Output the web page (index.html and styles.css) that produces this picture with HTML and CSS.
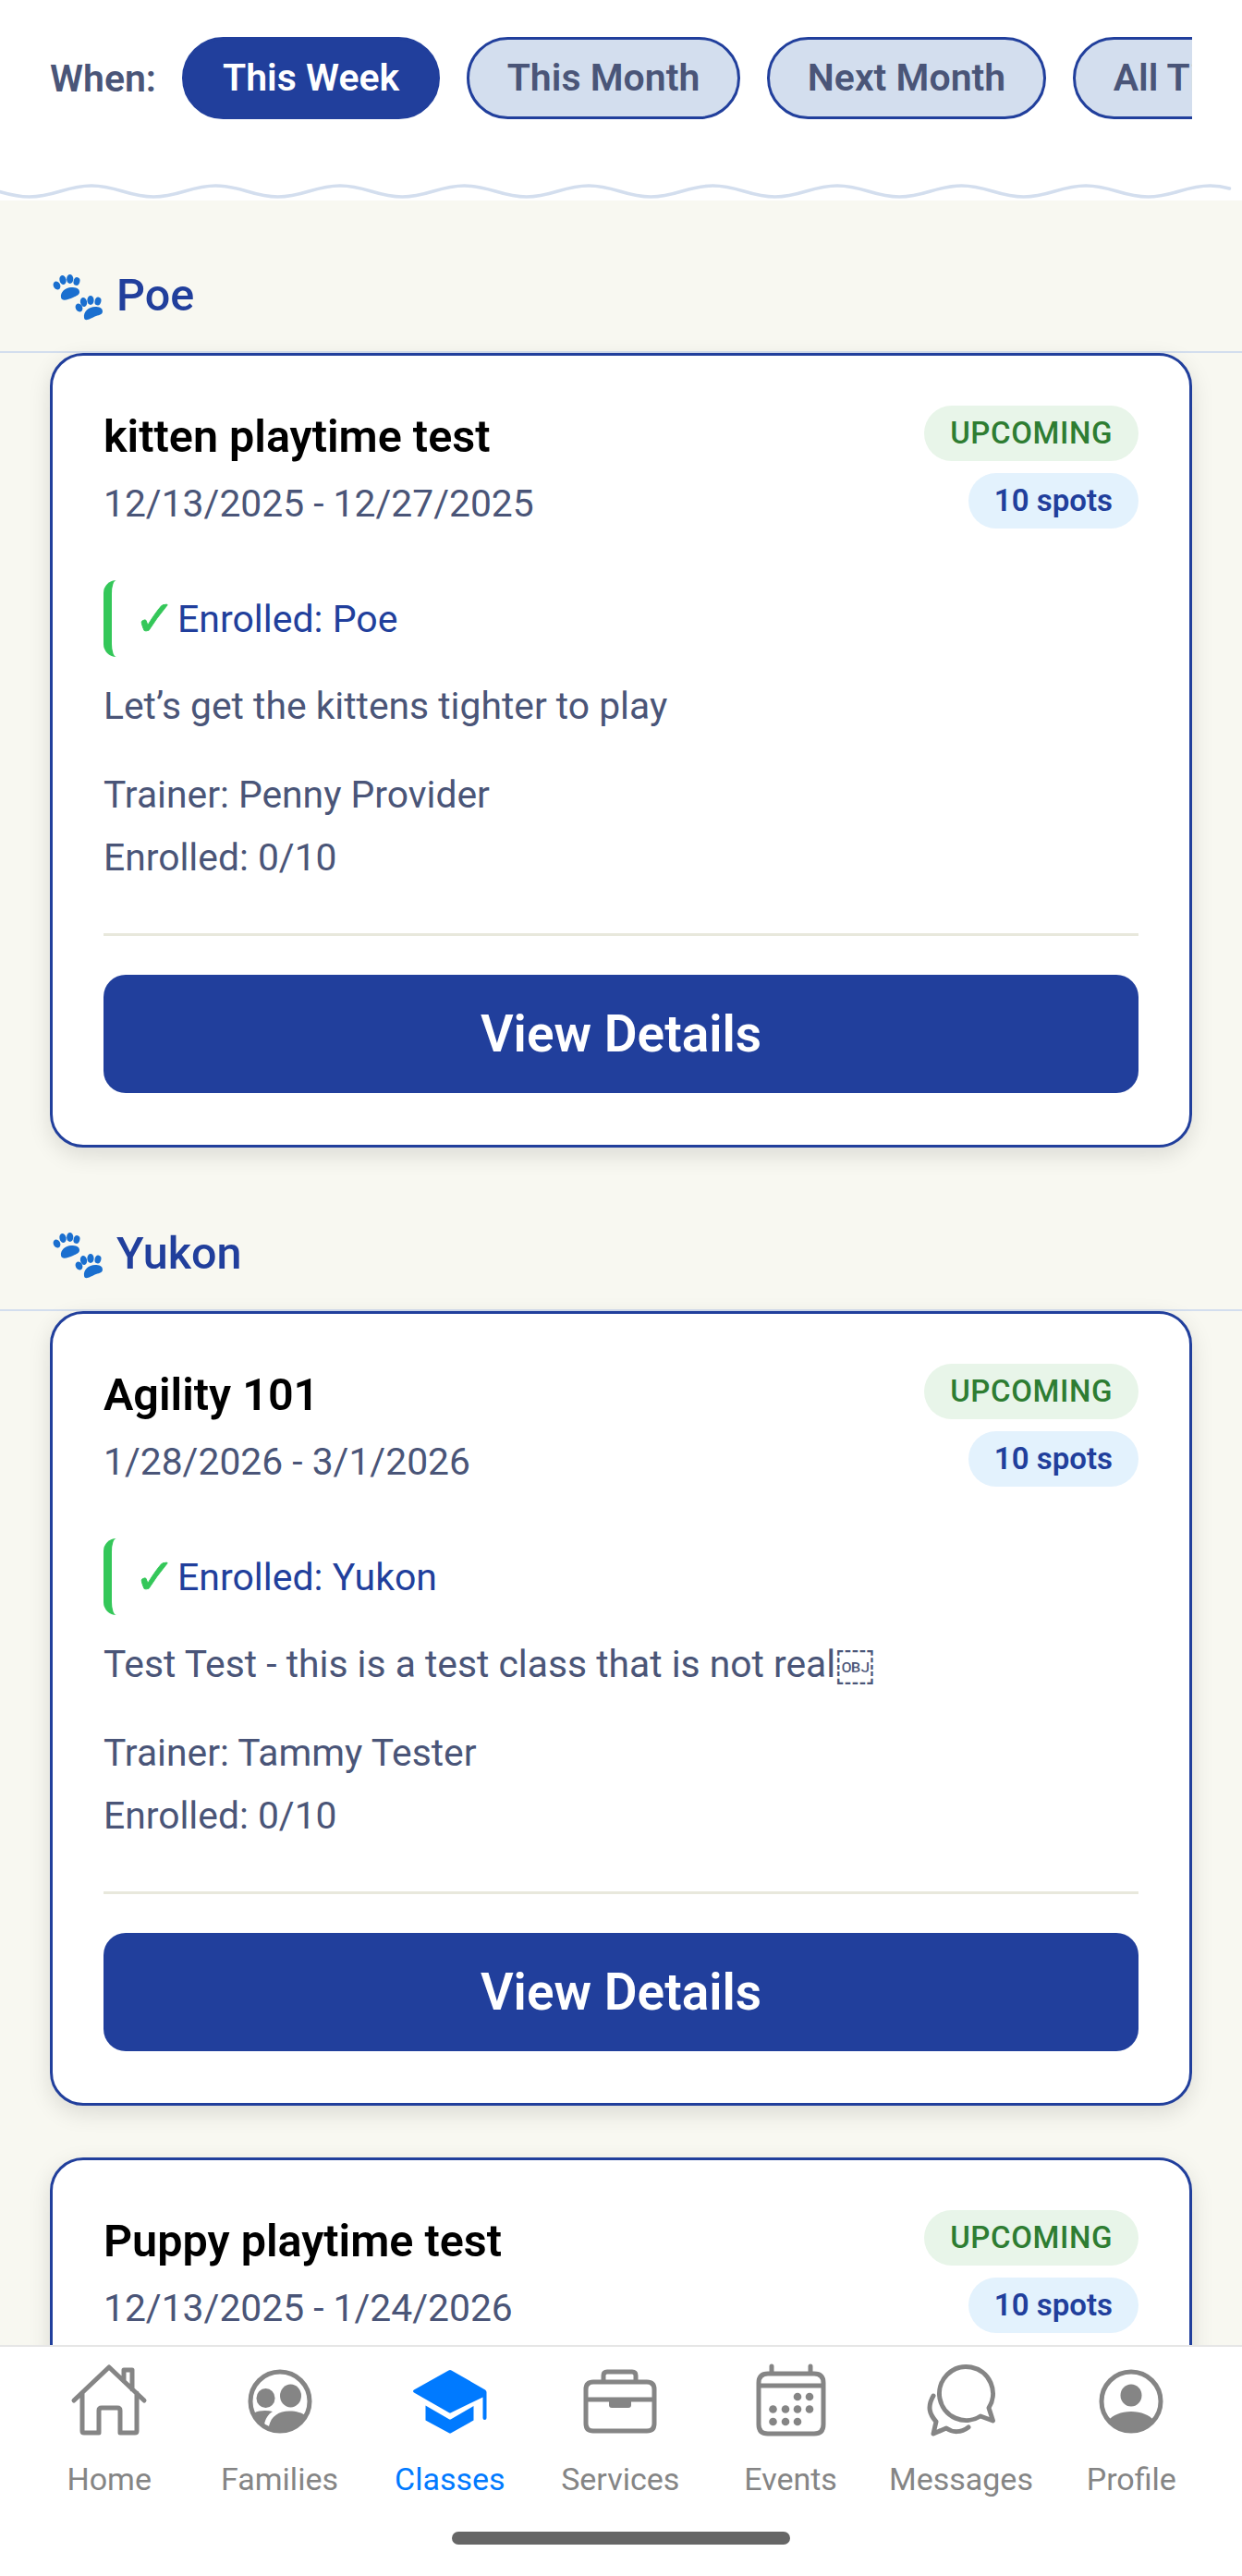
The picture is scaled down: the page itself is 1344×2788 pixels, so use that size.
FILE: index.html
```html
<!DOCTYPE html>
<html lang="en">
<head>
<meta charset="utf-8">
<title>Classes</title>
<link rel="stylesheet" href="styles.css">
</head>
<body>
<div class="app">
  <header class="filters">
    <div class="filter-row">
      <span class="when">When:</span>
      <div class="pills">
        <span class="pill active">This Week</span>
        <span class="pill">This Month</span>
        <span class="pill">Next Month</span>
        <span class="pill">All Time</span>
      </div>
    </div>
    <svg class="wave" width="1344" height="26" viewBox="0 0 1344 26"><path d="M-35.5 10c27 0 40 12 67.25 12s40-12 67.25-12 40 12 67.25 12 40-12 67.25-12 40 12 67.25 12 40-12 67.25-12 40 12 67.25 12 40-12 67.25-12 40 12 67.25 12 40-12 67.25-12 40 12 67.25 12 40-12 67.25-12 40 12 67.25 12 40-12 67.25-12 40 12 67.25 12 40-12 67.25-12 40 12 67.25 12 40-12 67.25-12 40 12 67.25 12 40-12 67.25-12c8 0 14 1 21 3"/></svg>
  </header>

  <main class="content">
    <section class="group">
      <h2 class="group-head">
        <svg class="paws" width="70" height="60" viewBox="0 0 70 60"><g><ellipse cx="11.500" cy="19" rx="3.700" ry="4.700" transform="rotate(-25 11.500 19)"/><ellipse cx="18" cy="13" rx="3.600" ry="5" transform="rotate(-12 18 13)"/><ellipse cx="25.700" cy="12" rx="3.600" ry="5"/><ellipse cx="33" cy="14.500" rx="3.400" ry="4.500" transform="rotate(14 33 14.500)"/><path d="M16 32c-1-6 5-11 11-11 5 0 9 1 9 5 0 3-3 4-7 6-5 2-12 5-13 0z"/></g><g><ellipse cx="35.500" cy="43" rx="3.700" ry="4.700" transform="rotate(-25 35.500 43)"/><ellipse cx="40.500" cy="37" rx="3.600" ry="5" transform="rotate(-12 40.500 37)"/><ellipse cx="48" cy="35" rx="3.600" ry="5"/><ellipse cx="56" cy="36" rx="3.400" ry="4.500" transform="rotate(14 56 36)"/><path d="M41 54c-1-7 5-12 12-12 4 0 8 1 8 5 0 3-3 4-7 5-5 2-12 7-13 2z"/></g></svg>
        <span class="group-name">Poe</span>
      </h2>
      <article class="card">
        <div class="card-top">
          <div class="card-titles">
            <h3 class="card-title">kitten playtime test</h3>
            <p class="card-date">12/13/2025 - 12/27/2025</p>
          </div>
          <div class="badges">
            <span class="badge upcoming">UPCOMING</span>
            <span class="badge spots">10 spots</span>
          </div>
        </div>
        <div class="enrolled"><span class="tick">✓</span><span>Enrolled: Poe</span></div>
        <p class="desc">Let’s get the kittens tighter to play</p>
        <div class="meta">
          <p>Trainer: Penny Provider</p>
          <p>Enrolled: 0/10</p>
        </div>
        <div class="rule"></div>
        <button class="details">View Details</button>
      </article>
    </section>

    <section class="group">
      <h2 class="group-head">
        <svg class="paws" width="70" height="60" viewBox="0 0 70 60"><g><ellipse cx="11.500" cy="19" rx="3.700" ry="4.700" transform="rotate(-25 11.500 19)"/><ellipse cx="18" cy="13" rx="3.600" ry="5" transform="rotate(-12 18 13)"/><ellipse cx="25.700" cy="12" rx="3.600" ry="5"/><ellipse cx="33" cy="14.500" rx="3.400" ry="4.500" transform="rotate(14 33 14.500)"/><path d="M16 32c-1-6 5-11 11-11 5 0 9 1 9 5 0 3-3 4-7 6-5 2-12 5-13 0z"/></g><g><ellipse cx="35.500" cy="43" rx="3.700" ry="4.700" transform="rotate(-25 35.500 43)"/><ellipse cx="40.500" cy="37" rx="3.600" ry="5" transform="rotate(-12 40.500 37)"/><ellipse cx="48" cy="35" rx="3.600" ry="5"/><ellipse cx="56" cy="36" rx="3.400" ry="4.500" transform="rotate(14 56 36)"/><path d="M41 54c-1-7 5-12 12-12 4 0 8 1 8 5 0 3-3 4-7 5-5 2-12 7-13 2z"/></g></svg>
        <span class="group-name">Yukon</span>
      </h2>
      <div class="cards">
        <article class="card">
          <div class="card-top">
            <div class="card-titles">
              <h3 class="card-title">Agility 101</h3>
              <p class="card-date">1/28/2026 - 3/1/2026</p>
            </div>
            <div class="badges">
              <span class="badge upcoming">UPCOMING</span>
              <span class="badge spots">10 spots</span>
            </div>
          </div>
          <div class="enrolled"><span class="tick">✓</span><span>Enrolled: Yukon</span></div>
          <p class="desc">Test Test - this is a test class that is not real￼</p>
          <div class="meta">
            <p>Trainer: Tammy Tester</p>
            <p>Enrolled: 0/10</p>
          </div>
          <div class="rule"></div>
          <button class="details">View Details</button>
        </article>
        <article class="card">
          <div class="card-top">
            <div class="card-titles">
              <h3 class="card-title">Puppy playtime test</h3>
              <p class="card-date">12/13/2025 - 1/24/2026</p>
            </div>
            <div class="badges">
              <span class="badge upcoming">UPCOMING</span>
              <span class="badge spots">10 spots</span>
            </div>
          </div>
        </article>
      </div>
    </section>
  </main>

  <nav class="tabbar">
    <div class="tabs">
      <a class="tab">
        <svg class="ico" viewBox="0 0 84 84"><path d="M4 41 42 5l38 36M13 33v41q0 2 2 2h16V52q0-3 3-3h17q3 0 3 3v24h16q2 0 2-2V33M58 20V8h9v21"/></svg>
        <span>Home</span>
      </a>
      <a class="tab">
        <svg class="ico" viewBox="0 0 84 84"><circle cx="42" cy="42" r="32"/><g class="solid"><ellipse cx="26.500" cy="38.500" rx="10" ry="10.500"/><ellipse cx="53.500" cy="36" rx="11.500" ry="12.500"/><path d="M14 54.500c6-3 14-3 20-1.500-5 3-8 8-9 14-1.500 3-14-4-11-12.500z"/><path d="M30 69c2-11 11-16.500 22-16.500 8 0 14 2 18 5-3 11-14 17-28 17-5 0-10-2-12-5.500z"/></g></svg>
        <span>Families</span>
      </a>
      <a class="tab current">
        <svg class="ico" viewBox="0 0 84 84"><path class="solid" d="M40.500 8.500q1.500-1 3 0l36.500 21q1.500 1 1.500 2.500v28q0 2-2 2t-2-2V37.500L43.500 54q-1.500 1-3 0L3 32.500q-2-1.500 0-3zM15.500 46.500 40.500 61q1.500 1 3 0l24-14v15.500L43.500 76q-1.500 1-3 0l-25-13.500z"/></svg>
        <span>Classes</span>
      </a>
      <a class="tab">
        <svg class="ico" viewBox="0 0 84 84"><path d="M24 21v-7q0-4 4-4h27q4 0 4 4v7M13 21h58q8 0 8 8v37q0 8-8 8H13q-8 0-8-8V29q0-8 8-8zM5 40h74"/><path class="solid" d="M30 40h24v6q0 3-3 3H33q-3 0-3-3z"/></svg>
        <span>Services</span>
      </a>
      <a class="tab">
        <svg class="ico" viewBox="0 0 84 84"><path d="M17 12h50q10 0 10 10v45q0 10-10 10H17q-10 0-10-10V22q0-10 10-10zM7 25h70M21 4v8M63 4v8"/><g class="solid"><circle cx="49" cy="37" r="4.300"/><circle cx="62" cy="37" r="4.300"/><circle cx="22.500" cy="50.500" r="4.300"/><circle cx="36" cy="50.500" r="4.300"/><circle cx="49" cy="50.500" r="4.300"/><circle cx="62" cy="50.500" r="4.300"/><circle cx="22.500" cy="64" r="4.300"/><circle cx="36" cy="64" r="4.300"/><circle cx="49" cy="64" r="4.300"/></g></svg>
        <span>Events</span>
      </a>
      <a class="tab">
        <svg class="ico" viewBox="0 0 84 84"><path d="M63 58 76.500 63 72 49A29 29 0 1 0 63 58ZM12 36C5 48 8 56 15 64L12 77 26 71C33 76 42 76 50 70"/></svg>
        <span>Messages</span>
      </a>
      <a class="tab">
        <svg class="ico" viewBox="0 0 84 84"><circle cx="42" cy="42" r="32"/><g class="solid"><ellipse cx="42" cy="35.500" rx="11.500" ry="12"/><path d="M18 62c4-5 13-9 24-9s20 4 24 9c-5 8-14 13-24 13s-19-5-24-13z"/></g></svg>
        <span>Profile</span>
      </a>
    </div>
    <div class="home-bar"></div>
  </nav>
</div>
</body>
</html>
```

FILE: styles.css
```css
* { box-sizing: border-box; }
html, body { margin: 0; padding: 0; }
body {
  width: 1344px;
  height: 2788px;
  overflow: hidden;
  background: #fff;
  font-family: Roboto, "Liberation Sans", sans-serif;
}
p, h2, h3 { margin: 0; font: inherit; }
.app { display: flex; flex-direction: column; height: 2788px; }

/* filter header */
.filters { flex: 0 0 217px; background: #fff; padding-top: 40px; position: relative; z-index: 2; display: flex; flex-direction: column; }
.filter-row { display: flex; align-items: center; padding-left: 54px; }
.when { font-size: 41px; font-weight: 600; color: #4a5578; width: 143px; }
.pills { display: flex; gap: 28.500px; width: 1093px; overflow: hidden; }
.pill {
  flex: none;
  height: 89px;
  padding: 0 41px;
  border: 3px solid #213f9c;
  border-radius: 45px;
  background: #d3deee;
  color: #4a5578;
  font-size: 41px;
  font-weight: 600;
  line-height: 82px;
  white-space: nowrap;
}
.pill.active { background: #213f9c; color: #fff; }
.wave { display: block; margin-top: 62px; }
.wave path { fill: none; stroke: #d3deee; stroke-width: 3.500; stroke-linecap: round; }

/* scroll content */
.content { flex: 1; min-height: 0; overflow: hidden; background: #f8f8f1; padding-top: 36px; }
.group + .group { margin-top: 48px; }
.group-head {
  height: 129px;
  padding-left: 50px;
  border-bottom: 2px solid #d3deee;
  display: flex;
  align-items: center;
  color: #213f9c;
  font-size: 48.500px;
  font-weight: 500;
}
.group-name { margin-top: 5px; }
.paws { fill: #1a6fcf; margin: 6px 6px 0 0; flex: none; }
.cards { display: flex; flex-direction: column; gap: 56px; }
.card {
  margin: 0 54px;
  padding: 54px 55px 56px;
  background: #fff;
  border: 3px solid #213f9c;
  border-radius: 36px;
  box-shadow: 0 8px 24px rgba(0, 0, 0, .12);
}
.card-top { display: flex; justify-content: space-between; }
.card-title { margin-top: 2px; font-size: 48.500px; font-weight: 600; line-height: 64px; color: #000; }
.card-date { margin-top: 10px; font-size: 40.800px; line-height: 60px; color: #4a5578; }
.badges { display: flex; flex-direction: column; align-items: flex-end; gap: 13px; }
.badge { height: 60px; padding: 0 28px; border-radius: 30px; font-size: 33px; line-height: 60px; white-space: nowrap; }
.upcoming { background: #e8f5e9; color: #2e7d32; font-weight: 500; letter-spacing: .6px; }
.spots { background: #e3f2fd; color: #213f9c; font-weight: 600; }
.enrolled {
  margin-top: 53px;
  height: 83px;
  padding-left: 24px;
  border-left: 9px solid #34c759;
  border-radius: 14px;
  display: flex;
  align-items: center;
  color: #213f9c;
  font-size: 41px;
}
.tick { flex: none; width: 47px; color: #34c759; font-size: 54px; font-weight: 700; font-family: "DejaVu Sans", sans-serif; -webkit-text-stroke: .8px #34c759; }
.desc { margin-top: 26px; font-size: 40.800px; line-height: 54px; color: #4a5578; }
.meta { margin-top: 39px; display: flex; flex-direction: column; gap: 8px; font-size: 40.800px; line-height: 60px; color: #4a5578; }
.rule { margin-top: 52px; height: 3px; background: #e8e8dc; }
.details {
  display: block;
  width: 100%;
  height: 128px;
  margin-top: 42px;
  border: 0;
  border-radius: 24px;
  background: #213f9c;
  color: #fff;
  font-family: inherit;
  font-size: 55px;
  font-weight: 600;
}

/* tab bar */
.tabbar { flex: 0 0 250px; background: #fff; border-top: 2px solid #e6e6e6; position: relative; z-index: 2; display: flex; flex-direction: column; }
.tabs { display: grid; grid-template-columns: repeat(7, 1fr); padding: 17px 27.500px 0 26px; }
.tab { display: flex; flex-direction: column; align-items: center; color: #858585; font-size: 34px; line-height: 48px; }
.tab.current { color: #007aff; }
.ico { width: 84px; height: 84px; fill: none; stroke: #858585; stroke-width: 5; stroke-linecap: round; stroke-linejoin: round; margin-bottom: 18px; }
.ico .solid { fill: #858585; stroke: none; }
.current .ico .solid { fill: #007aff; }
.home-bar { width: 366px; height: 14px; margin: 33px auto 0; border-radius: 7px; background: #666; }
```
